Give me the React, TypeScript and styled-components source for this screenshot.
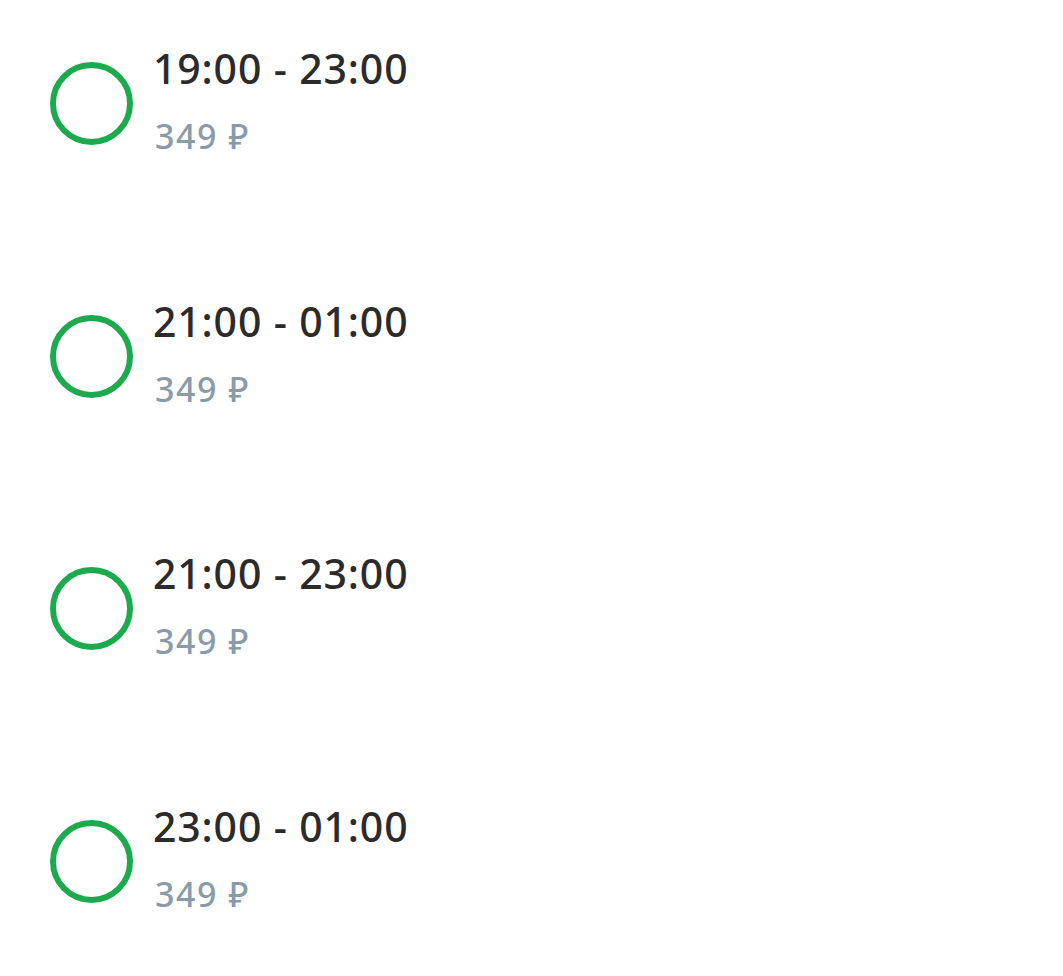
import React from "react";
import styled, { createGlobalStyle } from "styled-components";

const Global = createGlobalStyle`
  html, body { margin: 0; padding: 0; background: #ffffff; }
  body { font-family: "Noto Sans", "Open Sans", sans-serif; }
`;

const List = styled.div`
  display: flex;
  flex-direction: column;
  gap: 136.5px;
  padding: 42px 0 0 50px;
`;

const Row = styled.label`
  display: flex;
  align-items: flex-start;
`;

const Radio = styled.span`
  box-sizing: border-box;
  flex: none;
  width: 83px;
  height: 83px;
  border-radius: 50%;
  border: 6px solid #1daa4f;
  margin-top: 20px;
`;

const Texts = styled.div`
  display: flex;
  flex-direction: column;
  margin-left: 20px;
`;

const Time = styled.div`
  font-size: 41px;
  font-weight: 500;
  line-height: 52px;
  color: #2b2b2b;
  letter-spacing: 0.85px;
`;

const Price = styled.div`
  font-size: 34px;
  font-weight: 500;
  line-height: 44px;
  color: #8a9ba8;
  letter-spacing: 1.6px;
  margin-top: 20px;
  padding-left: 2px;
`;

const slots = ["19:00 - 23:00", "21:00 - 01:00", "21:00 - 23:00", "23:00 - 01:00"];

export default function App() {
  return (
    <>
      <Global />
      <List>
        {slots.map((s) => (
          <Row key={s}>
            <Radio />
            <Texts>
              <Time>{s}</Time>
              <Price>349 ₽</Price>
            </Texts>
          </Row>
        ))}
      </List>
    </>
  );
}
